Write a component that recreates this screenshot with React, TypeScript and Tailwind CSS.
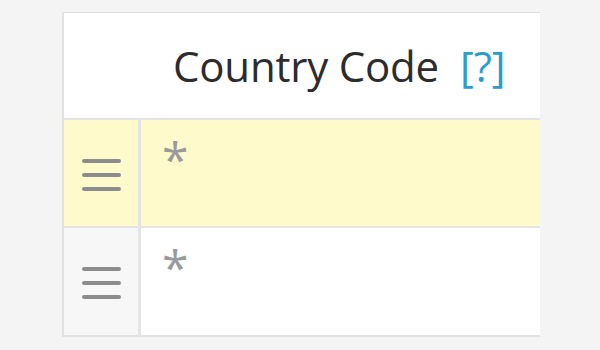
export default function App() {
  const rows = [{ active: true }, { active: false }];
  return (
    <div className="w-[600px] h-[350px] bg-[#f4f4f4] pt-[12px] pl-[62px] overflow-hidden" style={{ fontFamily: '"Open Sans", sans-serif' }}>
      <div className="w-[478px] border-l-2 border-t border-b-2 border-[#e1e1e1] bg-white">
        {/* header */}
        <div className="h-[107px] flex items-center pl-[109px] border-b-2 border-[#e4e4e4]">
          <span className="text-[42px] leading-none text-[#2c2c2c] tracking-[-0.2px]">Country Code</span>
          <span className="ml-[21px] text-[42px] leading-none text-[#2e9ccb]">[?]</span>
        </div>
        {rows.map((r, i) => (
          <div
            key={i}
            className={`flex ${i === 0 ? "h-[108px] border-b-2 border-[#e4e4e4] bg-[#fffacb]" : "h-[107px] bg-white"}`}
          >
            <div className={`w-[77px] flex flex-col justify-center items-center gap-[10px] pt-[3px] border-r-[3px] border-[#e4e4e4] ${r.active ? "bg-[#fffacb]" : "bg-[#f7f7f7]"}`}>
              <div className="w-[39px] h-[4px] rounded-full bg-[#8c8c8c]" />
              <div className="w-[39px] h-[4px] rounded-full bg-[#8c8c8c]" />
              <div className="w-[39px] h-[4px] rounded-full bg-[#8c8c8c]" />
            </div>
            <div className="flex-1 pl-[21px] pt-[15px]">
              <span className="text-[48px] leading-none text-[#9a9a9a]">*</span>
            </div>
          </div>
        ))}
      </div>
    </div>
  );
}
